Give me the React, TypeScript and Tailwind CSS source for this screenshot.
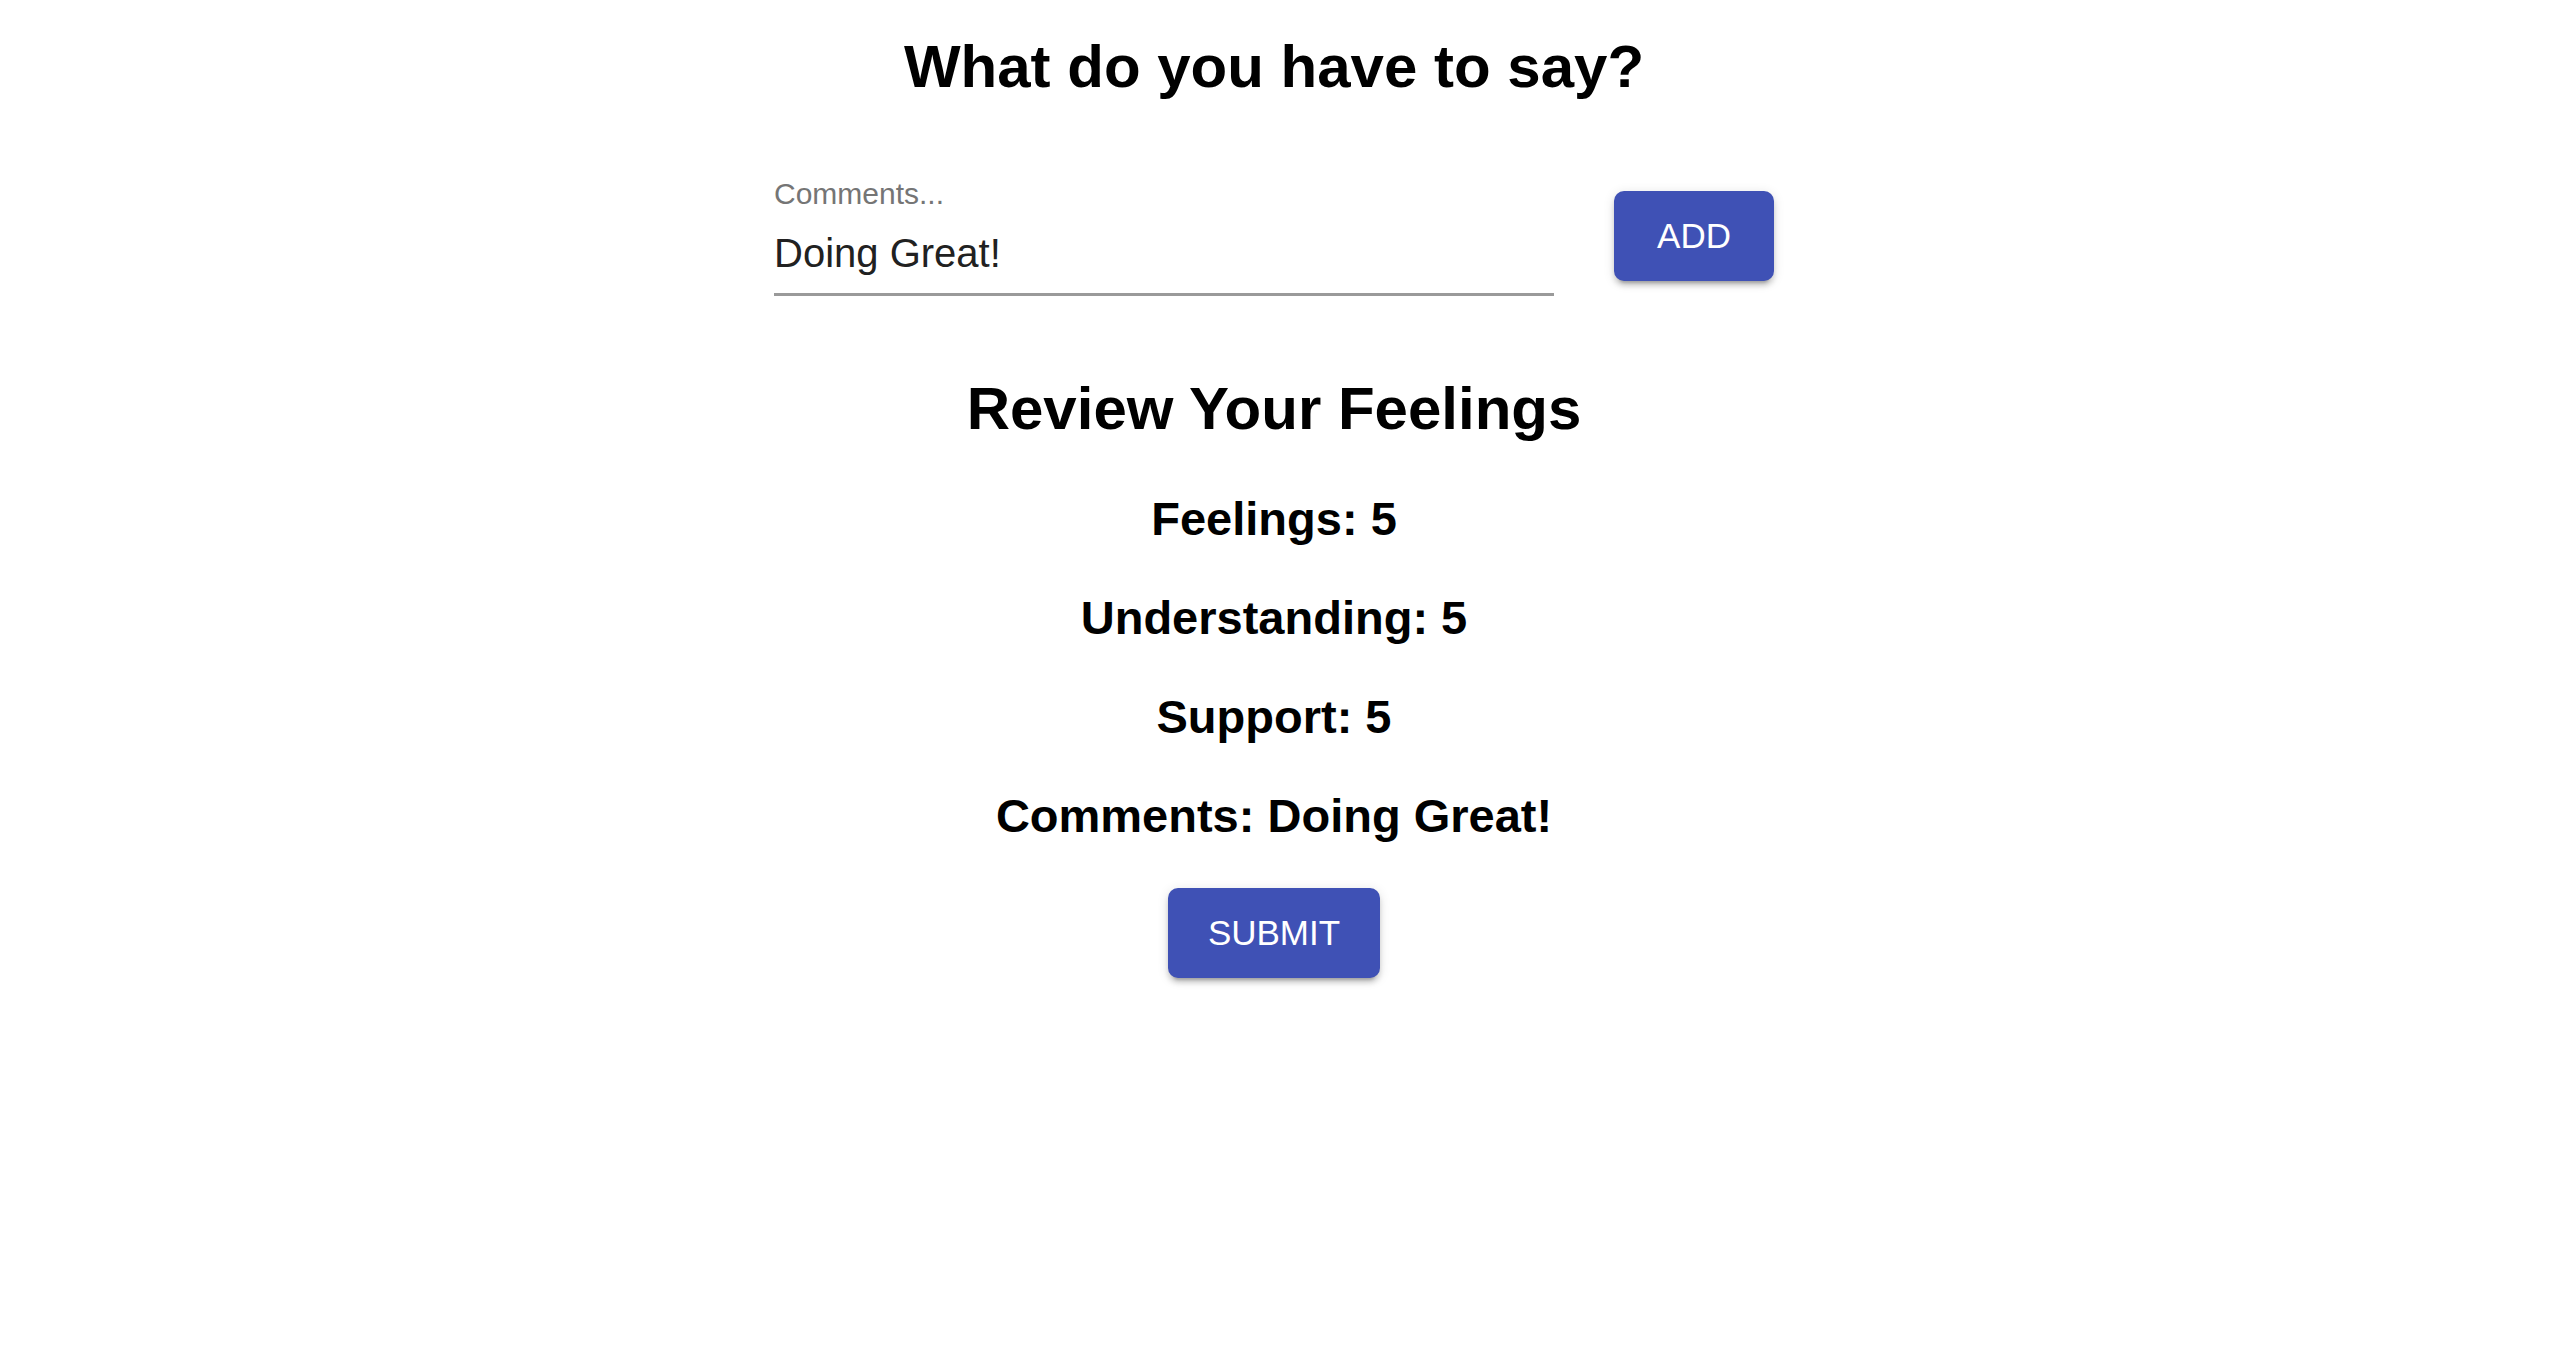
import React from "react";

const FONT = "font-['Liberation_Sans','Helvetica_Neue',Arial,sans-serif]";

function RaisedButton({ label }: { label: string }) {
  return (
    <button
      type="button"
      className="flex h-[90px] min-w-[160px] items-center justify-center rounded-[10px] bg-[#3f51b5] px-[40px] text-[35px] uppercase text-white shadow-[0_7px_3px_-5px_rgba(0,0,0,0.2),0_5px_5px_0_rgba(0,0,0,0.14),0_2px_12px_0_rgba(0,0,0,0.12)]"
    >
      {label}
    </button>
  );
}

function Summary({ label, value }: { label: string; value: string | number }) {
  return (
    <h3 className="text-[47px] font-bold leading-[47px] text-black">
      {label}: {value}
    </h3>
  );
}

export default function App() {
  const comment = "Doing Great!";
  return (
    <div className={`flex min-h-screen flex-col items-center bg-white pr-[6px] ${FONT}`}>
      <h2 className="mt-[37px] text-[60px] font-bold leading-[60px] text-black">What do you have to say?</h2>

      <div className="mt-[79px] flex items-center gap-[60px]">
        <div className="w-[780px]">
          <div className="pt-[3px] text-[30px] leading-[30px] text-[#757575]">Comments...</div>
          <div className="mt-[6px] border-b-[3px] border-[#9a9a9a] pb-[16px] pt-[15px] text-[40px] leading-[47px] text-[#212121]">
            {comment}
          </div>
        </div>
        <RaisedButton label="Add" />
      </div>

      <h2 className="mt-[83px] text-[60px] font-bold leading-[60px] text-black">Review Your Feelings</h2>
      <div className="mt-[56px] flex flex-col items-center gap-[52px]">
        <Summary label="Feelings" value={5} />
        <Summary label="Understanding" value={5} />
        <Summary label="Support" value={5} />
        <Summary label="Comments" value={comment} />
      </div>
      <div className="mt-[49px]">
        <RaisedButton label="Submit" />
      </div>
    </div>
  );
}
